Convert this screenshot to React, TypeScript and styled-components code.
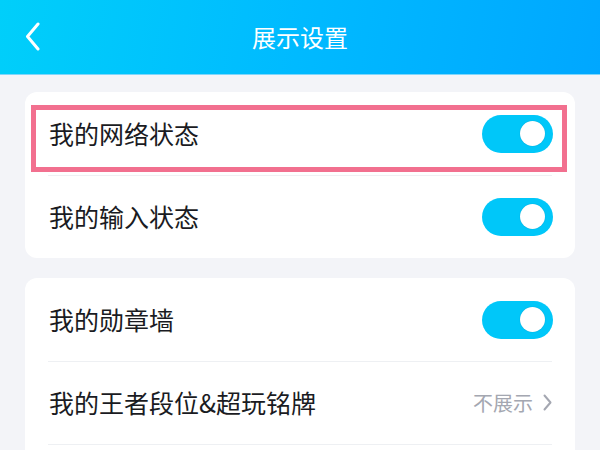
import React from "react";
import styled, { createGlobalStyle } from "styled-components";

const Global = createGlobalStyle`
  html, body { margin: 0; padding: 0; }
  body {
    background: #f3f4f8;
    font-family: "Noto Sans CJK SC", "Noto Sans", sans-serif;
    overflow: hidden;
  }
`;

const Page = styled.div`
  width: 600px;
  height: 450px;
  background: #f3f4f8;
  overflow: hidden;
`;

const Header = styled.header`
  position: relative;
  height: 74px;
  display: flex;
  align-items: center;
  justify-content: center;
  background: linear-gradient(100deg, #00cffa 0%, #00baff 50%, #00a7ff 100%);
  border-bottom: 1px solid #7fd6fb;
`;

const BackButton = styled.button`
  position: absolute;
  left: 24px;
  top: 22px;
  width: 20px;
  height: 30px;
  padding: 0;
  border: 0;
  background: none;
  display: flex;
`;

const Title = styled.h1`
  margin: 0;
  font-size: 24px;
  font-weight: 400;
  color: #ffffff;
  line-height: 1;
  margin-top: 0;
`;

const Content = styled.main`
  padding: 17px 25px 0;
  display: flex;
  flex-direction: column;
  gap: 20px;
`;

const Card = styled.section<{ $open?: boolean }>`
  position: relative;
  background: #ffffff;
  border-radius: 12px;
  display: flex;
  flex-direction: column;
  padding-bottom: ${(p) => (p.$open ? "60px" : "0")};
`;

const Row = styled.div<{ $divider?: boolean }>`
  height: 83px;
  display: flex;
  align-items: center;
  justify-content: space-between;
  padding: 0 22px 0 24px;
  box-sizing: border-box;
  position: relative;
  ${(p) =>
    p.$divider
      ? `&::after {
    content: "";
    position: absolute;
    left: 23px;
    right: 23px;
    bottom: -1px;
    height: 1px;
    background: #eef0f3;
  }`
      : ""}
`;

const Label = styled.span`
  font-size: 25px;
  color: #1a1b22;
  line-height: 1;
`;

const Toggle = styled.div<{ $on: boolean }>`
  width: 71px;
  height: 38px;
  border-radius: 19px;
  background: ${(p) => (p.$on ? "#00c7f9" : "#dcdfe5")};
  display: flex;
  align-items: center;
  justify-content: ${(p) => (p.$on ? "flex-end" : "flex-start")};
  padding: 0 8px;
  box-sizing: border-box;
`;

const Knob = styled.div`
  width: 25px;
  height: 25px;
  border-radius: 50%;
  background: #ffffff;
  box-shadow: 0 0 1px rgba(0, 60, 90, 0.35);
`;

const Value = styled.span`
  display: flex;
  align-items: center;
  gap: 10px;
  font-size: 20px;
  color: #a4a7b1;
  line-height: 1;
  margin-right: 1px;
`;

const Highlight = styled.div`
  position: absolute;
  left: 6px;
  top: 13px;
  width: 536px;
  height: 67px;
  border: 5px solid #f2708f;
  box-sizing: border-box;
  pointer-events: none;
`;

const Switch = ({ on }: { on: boolean }) => (
  <Toggle $on={on}>
    <Knob />
  </Toggle>
);

const Chevron = () => (
  <svg width="9" height="17" viewBox="0 0 9 17">
    <path d="M1.5 1.5 L7.5 8.5 L1.5 15.5" fill="none" stroke="#a4a7b1" strokeWidth="2" strokeLinecap="round" strokeLinejoin="round" />
  </svg>
);

export default function App() {
  return (
    <Page>
      <Global />
      <Header>
        <BackButton aria-label="返回">
          <svg width="18" height="30" viewBox="0 0 18 30">
            <path d="M14 2 L3.5 14.5 L14 27" fill="none" stroke="#ffffff" strokeWidth="3" strokeLinecap="round" strokeLinejoin="round" />
          </svg>
        </BackButton>
        <Title>展示设置</Title>
      </Header>
      <Content>
        <Card>
          <Row $divider>
            <Label>我的网络状态</Label>
            <Switch on />
          </Row>
          <Row>
            <Label>我的输入状态</Label>
            <Switch on />
          </Row>
          <Highlight />
        </Card>
        <Card $open>
          <Row $divider>
            <Label>我的勋章墙</Label>
            <Switch on />
          </Row>
          <Row $divider>
            <Label>我的王者段位&amp;超玩铭牌</Label>
            <Value>
              不展示
              <Chevron />
            </Value>
          </Row>
        </Card>
      </Content>
    </Page>
  );
}
